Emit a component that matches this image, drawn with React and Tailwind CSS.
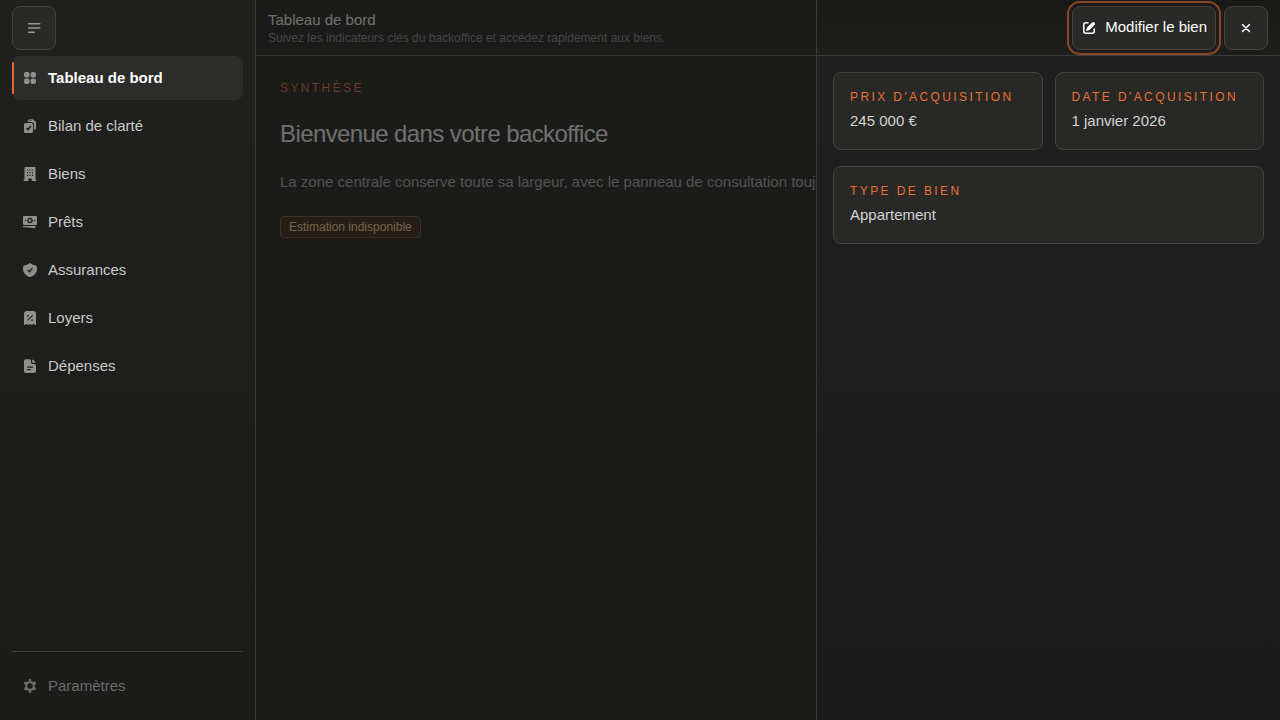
import React from "react";

function Icon({ children, className = "" }) {
  return (
    <svg viewBox="0 0 16 16" fill="currentColor" fillRule="evenodd" clipRule="evenodd" aria-hidden="true" className={`size-4 shrink-0 ${className}`}>
      {children}
    </svg>
  );
}

const icons = {
  menu: (
    <g>
      <rect x="2" y="3" width="12.5" height="1.5" rx=".75" />
      <rect x="2" y="7.25" width="12.5" height="1.5" rx=".75" />
      <rect x="2" y="11.5" width="7" height="1.5" rx=".75" />
    </g>
  ),
  grid: (
    <g>
      <rect x="2" y="2" width="5.5" height="5.5" rx="2" />
      <rect x="8.5" y="2" width="5.5" height="5.5" rx="2" />
      <rect x="2" y="8.5" width="5.5" height="5.5" rx="2" />
      <rect x="8.5" y="8.5" width="5.5" height="5.5" rx="2" />
    </g>
  ),
  clipboard: (
    <g>
      <path d="M5.1 3.5A3 3 0 0 1 8 1.2h2.2a2 2 0 0 1 1.8 1.3A2.3 2.3 0 0 1 14 4.8V10a2 2 0 0 1-2 2V6.5A2.5 2.5 0 0 0 9.500 4H6.600a1.500 1.500 0 0 1 1.400-1.300h2a.7.7 0 0 0-.7-.4H8A1.700 1.700 0 0 0 6.500 3.500Z" />
      <path d="M3.500 5A1.500 1.500 0 0 0 2 6.500v7A1.500 1.500 0 0 0 3.500 15h6a1.500 1.500 0 0 0 1.500-1.500v-7A1.500 1.500 0 0 0 9.500 5Zm5.600 3.950a.75.75 0 0 0-1.200-.9L5.950 10.600l-.670-.670a.75.75 0 0 0-1.060 1.060l1.300 1.300a.75.75 0 0 0 1.130-.080Z" />
    </g>
  ),
  building: (
    <path d="M3.250 1a.75.75 0 0 0-.75.75V13.500h-.250a.75.75 0 0 0 0 1.500H6.250v-2a.5.5 0 0 1 .5-.5h2.500a.5.5 0 0 1 .5.5v2h4a.75.75 0 0 0 0-1.500h-.25V1.750A.75.75 0 0 0 12.750 1ZM5 3.400h1.100v1.100H5Zm2.450 0h1.100v1.100h-1.100Zm2.450 0h1.100v1.100H9.900ZM5 6.100h1.100v1.100H5Zm2.450 0h1.100v1.100h-1.100Zm2.450 0h1.100v1.100H9.900ZM5 8.800h1.100v1.100H5Zm2.450 0h1.100v1.100h-1.100Zm2.450 0h1.100v1.100H9.900Z" />
  ),
  banknote: (
    <g>
      <path d="M2 2a1 1 0 0 0-1 1v7a1 1 0 0 0 1 1h12a1 1 0 0 0 1-1V3a1 1 0 0 0-1-1Zm6 1.750a2.750 2.750 0 1 1 0 5.500 2.750 2.750 0 0 1 0-5.500Zm0 1.400a1.350 1.350 0 1 0 0 2.700 1.350 1.350 0 0 0 0-2.700ZM3.500 5.750a.75.75 0 1 1 0 1.500.75.75 0 0 1 0-1.500Zm9 0a.75.75 0 1 1 0 1.500.75.75 0 0 1 0-1.500Z" />
      <path d="M1.500 12a.6.6 0 0 0 0 1.200c3.700.050 7.200.3 10.700.950.7.130 1.300-.4 1.300-1.100V12Z" />
    </g>
  ),
  shield: (
    <path d="M8.500 1.300a.75.75 0 0 0-1 0A8.500 8.500 0 0 1 2.100 3.500a.75.75 0 0 0-.7.600C1.200 4.900 1 5.800 1 6.700c0 3.800 2.600 7 6.700 8.250.2.050.4.050.6 0C12.400 13.700 15 10.500 15 6.700c0-.9-.150-1.800-.4-2.600a.75.75 0 0 0-.7-.6 8.500 8.500 0 0 1-5.400-2.200Zm2.100 5.350a.65.65 0 0 0-1.050-.75L7.450 8.850 6.530 7.950a.65.65 0 0 0-.930.930l1.500 1.500a.65.65 0 0 0 1-.080Z" />
  ),
  receipt: (
    <path d="M4.500 1A2.500 2.500 0 0 0 2 3.500v10.750c0 .6.650.9 1.150.6L4.700 14l1.400.8c.3.150.6.150.8 0L8 14l1.100.8c.25.150.55.150.8 0L11.300 14l1.550.85c.5.300 1.150 0 1.150-.6V3.500A2.500 2.500 0 0 0 11.500 1ZM6 5a.85.85 0 1 1 0 1.700A.85.85 0 0 1 6 5Zm4 4.200a.85.85 0 1 1 0 1.700.85.85 0 0 1 0-1.700Zm.65-3.200a.5.5 0 0 0-.75-.7L5.350 9.900a.5.500 0 0 0 .7.7Z" />
  ),
  document: (
    <g>
      <path d="M4 1.200A2 2 0 0 0 2 3.200V13a2 2 0 0 0 2 2h8a2 2 0 0 0 2-2V7.500A1.500 1.500 0 0 0 12.500 6h-2A1.500 1.500 0 0 1 9 4.500V2.700A1.500 1.500 0 0 0 7.500 1.200ZM5.750 8.450h4.750a.6.6 0 0 1 0 1.200H5.750a.6.6 0 0 1 0-1.200Zm0 2.550h2.500a.6.6 0 0 1 0 1.200h-2.500a.6.6 0 0 1 0-1.200Z" />
      <path d="M10.200 1.400c1.600.4 2.900 1.700 3.400 3.300h-2.900a.5.5 0 0 1-.5-.5Z" />
    </g>
  ),
  cog: (
    <path d="M6.950 1.500a.7.7 0 0 1 .68-.5h.74a.7.7 0 0 1 .68.5l.45 1.650 1.300.75 1.650-.43a.7.7 0 0 1 .78.33l.7 1.220a.7.7 0 0 1-.1.840L12.650 7.250v1.500l1.180 1.390a.7.7 0 0 1 .1.840l-.7 1.220a.7.7 0 0 1-.78.330l-1.650-.430-1.300.750-.45 1.650a.7.7 0 0 1-.68.500h-.74a.7.7 0 0 1-.68-.500l-.45-1.650-1.300-.750-1.650.430a.7.7 0 0 1-.78-.330l-.7-1.220a.7.7 0 0 1 .1-.840L3.350 8.750v-1.500L2.170 5.860a.7.7 0 0 1-.1-.840l.7-1.220a.7.7 0 0 1 .78-.330l1.650.430 1.300-.750ZM8 5.250a2.750 2.750 0 1 0 0 5.500 2.750 2.750 0 0 0 0-5.500Z" />
  ),
  edit: (
    <g>
      <path d="M13.490 2.510a1.750 1.750 0 0 0-2.480 0L6.750 6.770c-.3.300-.55.670-.7 1.070l-.95 2.400a.5.500 0 0 0 .65.650l2.400-.95c.4-.150.770-.400 1.070-.700l4.270-4.250a1.750 1.750 0 0 0 0-2.480Z" />
      <path d="M4.750 3.500c-.69 0-1.250.56-1.250 1.250v6.500c0 .69.560 1.250 1.250 1.250h6.500c.69 0 1.250-.56 1.250-1.250V9A.75.75 0 0 1 14 9v2.250A2.750 2.750 0 0 1 11.250 14h-6.500A2.750 2.750 0 0 1 2 11.250v-6.500A2.750 2.750 0 0 1 4.750 2H7a.75.75 0 0 1 0 1.500Z" />
    </g>
  ),
  close: <path d="m4.500 4.500 7 7m0-7-7 7" fill="none" stroke="currentColor" strokeWidth="1.500" strokeLinecap="round" />,
};

const links = [
  ["Tableau de bord", "grid"],
  ["Bilan de clarté", "clipboard"],
  ["Biens", "building"],
  ["Prêts", "banknote"],
  ["Assurances", "shield"],
  ["Loyers", "receipt"],
  ["Dépenses", "document"],
];

function NavLink({ label, icon, active, muted }) {
  const tone = active
    ? "bg-[#2c2c2a] font-bold text-white"
    : muted
      ? "text-[#6b6b69]"
      : "text-[#cacac7]";
  return (
    <a
      href="#"
      aria-current={active ? "page" : undefined}
      className={`relative flex h-11 items-center gap-2.5 rounded-lg px-2.5 ${tone}`}
    >
      {active && <span className="absolute inset-y-1.5 left-0 w-0.5 rounded-full bg-[#e8673a]" />}
      <Icon className={muted ? "text-[#6b6b69]" : "text-[#8f8f8d]"}>{icons[icon]}</Icon>
      {label}
    </a>
  );
}

function Sidebar() {
  return (
    <aside className="flex w-64 shrink-0 flex-col border-r border-[#3b3b39] bg-linear-to-b from-[#20201f] to-[#1b1b19] px-3">
      <div className="flex h-14 items-center">
        <button type="button" aria-label="Réduire le menu" className="flex size-11 items-center justify-center rounded-lg border border-[#41413f] bg-[#292928] text-[#9b9b98]">
          <Icon>{icons.menu}</Icon>
        </button>
      </div>
      <nav className="flex flex-1 flex-col gap-1">
        {links.map(([label, icon], i) => (
          <NavLink key={label} label={label} icon={icon} active={i === 0} />
        ))}
      </nav>
      <div className="border-t border-[#3b3b39] py-3">
        <NavLink label="Paramètres" icon="cog" muted />
      </div>
    </aside>
  );
}

function Field({ label, value, className = "" }) {
  return (
    <div className={`flex flex-col gap-1 rounded-lg border border-[#424240] bg-[#282827] p-4 ${className}`}>
      <dt className="text-xs tracking-[0.2em] text-[#ea7034] uppercase">{label}</dt>
      <dd className="leading-6 text-[#d4d4d1]">{value}</dd>
    </div>
  );
}

function Drawer() {
  return (
    <section
      role="dialog"
      aria-label="Détail du bien"
      className="absolute inset-y-0 right-0 flex w-full max-w-[464px] flex-col border-l border-[#3b3b39] bg-linear-to-b from-[#20201f] to-[#1b1b1b]"
    >
      <header className="flex h-14 items-center justify-end gap-2 border-b border-[#3b3b39] bg-linear-to-b from-[#191918] to-[#1e1e1d] px-3 text-white">
        <button type="button" className="flex h-11 items-center gap-2 rounded-lg border border-[#434341] bg-[#292928] px-2 outline-2 outline-offset-3 outline-[#874729]">
          <Icon>{icons.edit}</Icon>
          Modifier le bien
        </button>
        <button type="button" aria-label="Fermer" className="flex size-11 items-center justify-center rounded-lg border border-[#434341] bg-[#292928]">
          <Icon>{icons.close}</Icon>
        </button>
      </header>
      <dl className="grid grid-cols-2 gap-x-3 gap-y-4 p-4">
        <Field label="Prix d'acquisition" value="245 000 €" />
        <Field label="Date d'acquisition" value="1 janvier 2026" />
        <Field label="Type de bien" value="Appartement" className="col-span-2" />
      </dl>
    </section>
  );
}

export default function App() {
  return (
    <div className="relative flex min-h-screen overflow-hidden bg-[#1c1c1b] font-['Liberation_Sans',Arial,sans-serif] text-[15px]">
      <Sidebar />
      <div className="relative min-w-0 flex-1">
        <header className="flex h-14 flex-col justify-center border-b border-[#60605e] px-3">
          <h2 className="leading-5 text-[#ededea]">Tableau de bord</h2>
          <p className="text-xs text-[#868683]">Suivez les indicateurs clés du backoffice et accédez rapidement aux biens.</p>
        </header>
        <main className="flex flex-col items-start gap-6 p-6">
          <p className="text-xs tracking-[0.2em] text-[#d96a32] uppercase">Synthèse</p>
          <h1 className="text-2xl leading-7 tracking-tight text-[#ededea]">Bienvenue dans votre backoffice</h1>
          <p className="leading-5 text-[#a5a5a2]">
            La zone centrale conserve toute sa largeur, avec le panneau de consultation toujours à droite.
          </p>
          <span className="rounded-sm border border-[#6b522e] bg-[#332414] px-2 py-0.5 text-xs text-[#f5cf8a]">Estimation indisponible</span>
        </main>
        <div className="absolute inset-0 bg-[#1a1a19]/60" />
      </div>
      <Drawer />
    </div>
  );
}
